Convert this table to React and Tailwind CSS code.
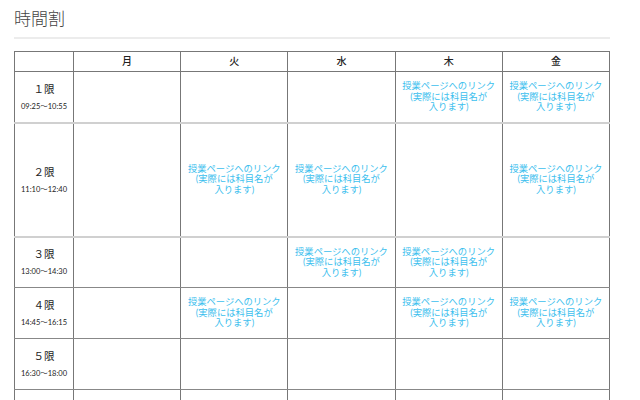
const days = ["月", "火", "水", "木", "金"];

const periods = [
  { label: "１限", time: "09:25〜10:55", h: "h-[51px]", cells: [0, 0, 0, 1, 1], light: true },
  { label: "２限", time: "11:10〜12:40", h: "h-[114px]", cells: [0, 1, 1, 0, 1], light: true },
  { label: "３限", time: "13:00〜14:30", h: "h-[51px]", cells: [0, 0, 1, 1, 0] },
  { label: "４限", time: "14:45〜16:15", h: "h-[51px]", cells: [0, 1, 0, 1, 1] },
  { label: "５限", time: "16:30〜18:00", h: "h-[51px]", cells: [0, 0, 0, 0, 0] },
  { label: "", time: "", h: "h-[51px]", cells: [0, 0, 0, 0, 0] },
];

const LinkText = () => (
  <a href="#" className="block text-[9.3px] leading-[10.5px] text-[#3cc0ee]">
    授業ページへのリンク
    <br />
    (実際には科目名が
    <br />
    入ります)
  </a>
);

export default function App() {
  return (
    <div
      className="w-[640px] h-[400px] overflow-hidden bg-white px-[14px] pt-[8px] text-[#222]"
      style={{ fontFamily: '"Lato", "Noto Sans CJK JP", sans-serif' }}
    >
      <h1 className="text-[17px] leading-[22px] text-[#444] font-light">時間割</h1>
      <div className="mt-[7px] w-[596px] h-[2px] bg-[#ececec]" />
      <table className="mt-[12px] w-[596px] table-fixed border-collapse">
        <colgroup>
          <col className="w-[59px]" />
          {days.map((d) => (
            <col key={d} />
          ))}
        </colgroup>
        <thead>
          <tr className="h-[20px]">
            <th className="border border-[#777]" />
            {days.map((d) => (
              <th key={d} className="border border-[#777] text-[10px] font-medium text-center">
                {d}
              </th>
            ))}
          </tr>
        </thead>
        <tbody>
          {periods.map((p, i) => (
            <tr key={i} className={`${p.h} ${p.light ? "border-b-2 border-b-[#d0d0d0]" : ""}`}>
              <td className="border-x border-x-[#777] border-b border-b-[#888] text-center align-middle p-0">
                {p.label && (
                  <>
                    <div className="text-[10.5px] leading-[14px]">{p.label}</div>
                    <div className="mt-[6px] text-[7.5px] leading-[10px]">{p.time}</div>
                  </>
                )}
              </td>
              {p.cells.map((c, j) => (
                <td
                  key={j}
                  className="border-x border-x-[#777] border-b border-b-[#888] text-center align-middle p-0"
                >
                  {c ? <LinkText /> : null}
                </td>
              ))}
            </tr>
          ))}
        </tbody>
      </table>
    </div>
  );
}
